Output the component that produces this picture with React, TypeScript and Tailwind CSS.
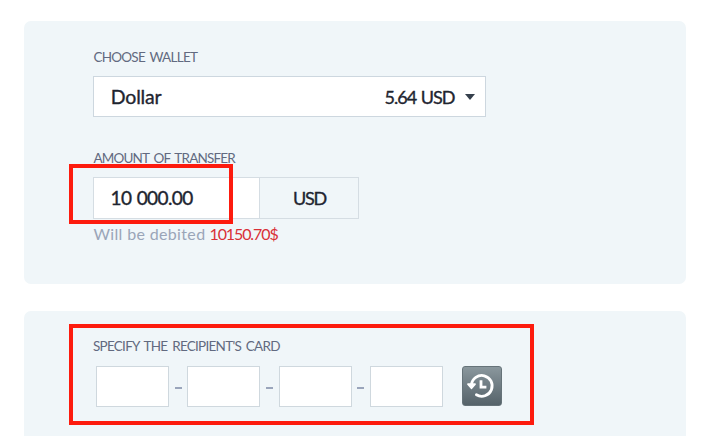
import React from "react";

function Label({ className, children }: { className: string; children: React.ReactNode }) {
  return (
    <div className={`w-max whitespace-nowrap text-[13.5px] leading-5 text-[#626a80] ${className}`}>{children}</div>
  );
}

function Digits() {
  return <div className="h-[41px] w-[73px] shrink-0 border border-[#cfd8de] bg-white" />;
}

function Dash() {
  return (
    <div className="flex w-[18.3px] shrink-0 justify-center pt-[3px]">
      <div className="h-[2px] w-[7px] bg-[#9aa5bb]" />
    </div>
  );
}

function HistoryIcon() {
  return (
    <svg className="-translate-x-[1px]" width="30" height="30" viewBox="0 0 30 30" fill="none" stroke="#fff">
      <path d="M5.4 13.8A10.4 10.4 0 1 1 10.4 23.8" strokeWidth="2.8" strokeLinecap="round" />
      <path d="M2 13.2H9L5.5 17.2Z" fill="#fff" strokeWidth="1.8" strokeLinejoin="round" />
      <path d="M15 9.2V16.2H20.4" strokeWidth="2.8" />
    </svg>
  );
}

export default function App() {
  return (
    <main className="flex h-[436px] w-[726px] flex-col gap-[27px] overflow-hidden bg-white pl-6 pt-[21px] font-['Lato','Open_Sans',sans-serif]">
      <section className="flex h-[263px] w-[662px] shrink-0 flex-col rounded-[7px] bg-[#f0f6f9] pl-[69.4px] pt-[26px]">
        <Label className="tracking-[-0.75px] [word-spacing:2px]">CHOOSE WALLET</Label>
        <div className="mt-[9px] flex h-[41px] w-[393px] items-center border border-[#cdd7df] bg-white pl-[16.4px] pr-[10px] text-[19.5px] text-[#1e2530]">
          <span className="mt-[1px] tracking-[-0.2px] [-webkit-text-stroke:0.35px]">Dollar</span>
          <span className="ml-auto mt-[1px] text-[18px] tracking-[-1px] [-webkit-text-stroke:0.35px] [word-spacing:1px]">5.64 USD</span>
          <span className="ml-[11px] h-0 w-0 border-x-[5.5px] border-t-[6px] border-x-transparent border-t-[#35404c]" />
        </div>
        <Label className="mt-[31px] tracking-[-0.8px] [word-spacing:2px]">AMOUNT OF TRANSFER</Label>
        <div className="relative mt-[9px] flex h-[42px] w-[266px] text-[18px] text-[#1e2530] [-webkit-text-stroke:0.35px]">
          <div className="flex w-[167px] items-center border border-[#d5dde3] bg-white pl-[16.2px]">
            <span className="text-[19px] tracking-[-0.6px] [word-spacing:1px]">10 000.00</span>
          </div>
          <div className="flex flex-1 items-center justify-center border border-l-0 border-[#d5dde3]">
            <span className="tracking-[-1.3px]">USD</span>
          </div>
          <div className="absolute -left-[24.4px] -top-[13px] h-[60px] w-[164px] border-4 border-[#fd1b0e]" />
        </div>
        <div className="mt-[3px] flex gap-[4px] whitespace-nowrap text-[16px] leading-6">
          <span className="tracking-[0.35px] text-[#9aa5b8]">Will be debited</span>
          <span className="tracking-[-1.1px] text-[#d93037]">10150.70$</span>
        </div>
      </section>
      <section className="h-[140px] w-[662px] shrink-0 rounded-t-[7px] bg-[#f0f6f9] pl-[45px] pt-[13px]">
        <div className="h-[101px] w-[465px] border-4 border-[#fd1b0e] pl-[20px] pt-[8px]">
          <Label className="tracking-[-0.73px] [word-spacing:2px]">SPECIFY THE RECIPIENT'S CARD</Label>
          <div className="ml-[3px] mt-[10px] flex items-center">
            <Digits />
            <Dash />
            <Digits />
            <Dash />
            <Digits />
            <Dash />
            <Digits />
            <button
              aria-label="Card history"
              className="-mt-[1px] ml-[19px] flex h-10 w-10 items-center justify-center rounded-[3px] border border-[#667379] bg-linear-to-b from-[#8a979d] to-[#56636a]"
            >
              <HistoryIcon />
            </button>
          </div>
        </div>
      </section>
    </main>
  );
}
